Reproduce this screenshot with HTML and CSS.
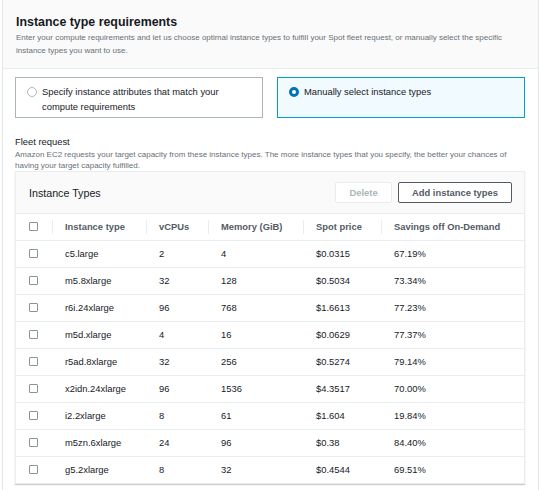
FILE: index.html
```html
<!DOCTYPE html>
<html lang="en">
<head>
    <meta charset="UTF-8">
    <meta name="viewport" content="width=device-width, initial-scale=1.0">
    <title>Instance type requirements</title>
    <link rel="stylesheet" href="styles.css">
</head>
<body>
    <div class="panel">
        <div class="panel-header">
            <h2>Instance type requirements</h2>
            <p class="desc">Enter your compute requirements and let us choose optimal instance types to fulfill your Spot fleet request, or manually select the specific instance types you want to use.</p>
        </div>
        <div class="panel-body">
            <div class="tiles">
                <label class="tile">
                    <span class="radio"></span>
                    <span>Specify instance attributes that match your compute requirements</span>
                </label>
                <label class="tile selected">
                    <span class="radio"></span>
                    <span>Manually select instance types</span>
                </label>
            </div>

            <div class="field-label">Fleet request</div>
            <p class="field-desc">Amazon EC2 requests your target capacity from these instance types. The more instance types that you specify, the better your chances of having your target capacity fulfilled.</p>

            <div class="table-box">
                <div class="table-header">
                    <span class="table-title">Instance Types</span>
                    <div class="actions">
                        <button class="btn" disabled>Delete</button>
                        <button class="btn">Add instance types</button>
                    </div>
                </div>
                <table>
                    <colgroup>
                        <col style="width: 36px">
                        <col style="width: 94px">
                        <col style="width: 62px">
                        <col style="width: 95px">
                        <col style="width: 78px">
                        <col>
                    </colgroup>
                    <thead>
                        <tr>
                            <th class="check-cell"><span class="checkbox"></span></th>
                            <th><div class="th-label">Instance type</div></th>
                            <th><div class="th-label">vCPUs</div></th>
                            <th><div class="th-label">Memory (GiB)</div></th>
                            <th><div class="th-label">Spot price</div></th>
                            <th><div class="th-label">Savings off On-Demand</div></th>
                        </tr>
                    </thead>
                    <tbody>
                        <tr><td class="check-cell"><span class="checkbox"></span></td><td>c5.large</td><td>2</td><td>4</td><td>$0.0315</td><td>67.19%</td></tr>
                        <tr><td class="check-cell"><span class="checkbox"></span></td><td>m5.8xlarge</td><td>32</td><td>128</td><td>$0.5034</td><td>73.34%</td></tr>
                        <tr><td class="check-cell"><span class="checkbox"></span></td><td>r6i.24xlarge</td><td>96</td><td>768</td><td>$1.6613</td><td>77.23%</td></tr>
                        <tr><td class="check-cell"><span class="checkbox"></span></td><td>m5d.xlarge</td><td>4</td><td>16</td><td>$0.0629</td><td>77.37%</td></tr>
                        <tr><td class="check-cell"><span class="checkbox"></span></td><td>r5ad.8xlarge</td><td>32</td><td>256</td><td>$0.5274</td><td>79.14%</td></tr>
                        <tr><td class="check-cell"><span class="checkbox"></span></td><td>x2idn.24xlarge</td><td>96</td><td>1536</td><td>$4.3517</td><td>70.00%</td></tr>
                        <tr><td class="check-cell"><span class="checkbox"></span></td><td>i2.2xlarge</td><td>8</td><td>61</td><td>$1.604</td><td>19.84%</td></tr>
                        <tr><td class="check-cell"><span class="checkbox"></span></td><td>m5zn.6xlarge</td><td>24</td><td>96</td><td>$0.38</td><td>84.40%</td></tr>
                        <tr><td class="check-cell"><span class="checkbox"></span></td><td>g5.2xlarge</td><td>8</td><td>32</td><td>$0.4544</td><td>69.51%</td></tr>
                    </tbody>
                </table>
            </div>
        </div>
    </div>
</body>
</html>
```

FILE: styles.css
```css
* {
    margin: 0;
    padding: 0;
    box-sizing: border-box;
}

body {
    font-family: "Liberation Sans", Arial, sans-serif;
    font-size: 9.4px;
    color: #16191f;
    background: #fff;
}

.panel {
    margin-left: 2px;
    width: 537px;
    height: 490px;
    border: 1px solid #e4e7e7;
    border-top: none;
    border-bottom: none;
}

.panel-header {
    height: 69px;
    padding: 14px 13px 0;
    background: #fafafa;
    border-bottom: 1px solid #eaeded;
}

.panel-header h2 {
    font-size: 12.4px;
    font-weight: bold;
    line-height: 16px;
    color: #16191f;
}

.desc {
    margin-top: 1px;
    font-size: 8px;
    line-height: 13px;
    color: #687078;
}

.panel-body {
    padding: 8px 13px 0 12px;
}

.tiles {
    display: grid;
    grid-template-columns: 248px 1fr;
    gap: 14px;
}

.tile {
    display: flex;
    align-items: flex-start;
    gap: 5px;
    height: 41px;
    padding: 7px 10px 0 11px;
    border: 1px solid #aab7b8;
    line-height: 14.5px;
    color: #16191f;
}

.tile.selected {
    background: #f1faff;
    border-color: #00a1c9;
}

.radio {
    flex: none;
    width: 10px;
    height: 10px;
    margin-top: 2px;
    border: 1px solid #aab7b8;
    border-radius: 50%;
    background: #fff;
}

.tile.selected .radio {
    border: 3px solid #0073bb;
}

.field-label {
    margin-top: 17px;
    line-height: 13px;
    color: #16191f;
}

.field-desc {
    margin-top: 1px;
    font-size: 8px;
    line-height: 11px;
    color: #687078;
}

.table-box {
    width: 510px;
    border: 1px solid #eaeded;
    box-shadow: 0 1px 1px rgba(0, 0, 0, 0.2);
    background: #fff;
}

.table-header {
    display: flex;
    justify-content: space-between;
    align-items: center;
    height: 42px;
    padding: 0 12px 0 13px;
    background: #fafafa;
    border-bottom: 1px solid #eaeded;
}

.table-title {
    font-size: 10.7px;
    color: #16191f;
}

.actions {
    display: flex;
    gap: 6px;
}

.btn {
    height: 21px;
    font-family: inherit;
    font-size: 9.4px;
    font-weight: bold;
    color: #545b64;
    background: #fff;
    border: 1px solid #545b64;
    border-radius: 2px;
    padding: 0 13px;
}

.btn:disabled {
    width: 57px;
    color: #aab7b8;
    border-color: #eaeded;
}

table {
    width: 100%;
    border-collapse: collapse;
    table-layout: fixed;
}

th {
    height: 26px;
    padding: 0;
    text-align: left;
    font-weight: bold;
    color: #545b64;
    border-bottom: 1px solid #eaeded;
}

.th-label {
    padding-left: 12px;
    line-height: 14px;
    border-left: 1px solid #eaeded;
}

td {
    height: 27px;
    padding: 0 0 0 13px;
    border-bottom: 1px solid #eaeded;
    color: #16191f;
}

tbody tr:last-child td {
    border-bottom: none;
}

th.check-cell,
td.check-cell {
    padding-left: 13px;
}

.checkbox {
    display: block;
    width: 9px;
    height: 9px;
    border: 1px solid #879596;
    border-radius: 1px;
    background: #fff;
}
```
